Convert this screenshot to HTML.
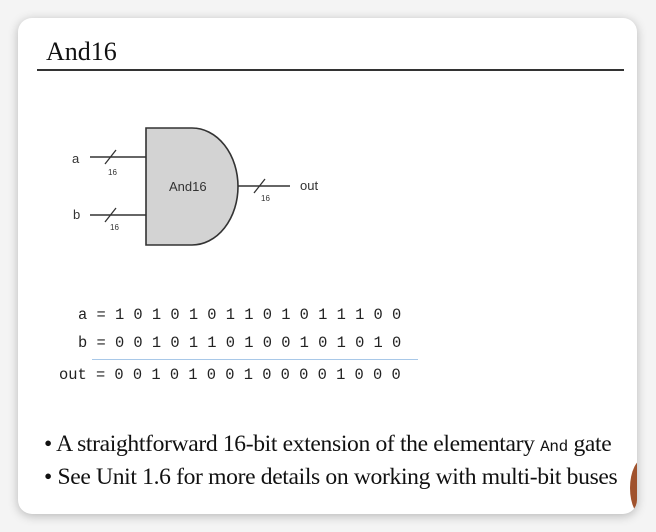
<!DOCTYPE html>
<html><head><style>
body{margin:0;width:656px;height:532px;background:#f4f4f4;overflow:hidden;position:relative;font-family:"Liberation Sans",sans-serif}
.card{position:absolute;left:18px;top:18px;width:619px;height:496px;background:#fff;border-radius:14px;box-shadow:0 2px 10px rgba(0,0,0,.25);overflow:hidden}
.t{position:absolute;font-family:"Liberation Serif",serif;color:#111}
.m{position:absolute;font-family:"Liberation Mono",monospace;font-size:15.4px;color:#222;white-space:pre}
</style></head><body>
<div class="card">
<div class="t" style="left:28px;top:19px;font-size:26px">And16</div>
<div style="position:absolute;left:19px;top:51px;width:587px;height:2px;background:#333"></div>
<svg style="position:absolute;left:0;top:0" width="619" height="496">
<g transform="translate(-18,-18)" stroke="#333" stroke-width="1.6" fill="none">
<path d="M146 128 H192 A46 58.5 0 0 1 192 245 H146 Z" fill="#d3d3d3"/>
<path d="M90 157 H146 M90 215 H146 M238 186 H290"/>
<path d="M105 164 L116 150 M105 222 L116 208 M254 193 L265 179" stroke-width="1.3"/>
<g stroke="none" fill="#333" font-family="Liberation Sans,sans-serif">
<text x="72" y="163" font-size="13">a</text>
<text x="73" y="219" font-size="13">b</text>
<text x="108" y="175" font-size="8">16</text>
<text x="110" y="230" font-size="8">16</text>
<text x="261" y="201" font-size="8">16</text>
<text x="300" y="190" font-size="13">out</text>
<text x="169" y="191" font-size="13">And16</text>
</g></g></svg>
<div class="m" style="left:60px;top:288px">a = 1 0 1 0 1 0 1 1 0 1 0 1 1 1 0 0</div>
<div class="m" style="left:60px;top:316px">b = 0 0 1 0 1 1 0 1 0 0 1 0 1 0 1 0</div>
<div style="position:absolute;left:74px;top:341px;width:326px;height:1px;background:#a8c8e8"></div>
<div class="m" style="left:41px;top:348px">out = 0 0 1 0 1 0 0 1 0 0 0 0 1 0 0 0</div>
<div class="t" style="left:26px;top:413px;font-size:23.6px;white-space:nowrap;letter-spacing:-0.35px">• A straightforward 16-bit extension of the elementary <span style="font-family:'Liberation Mono',monospace;font-size:16px">And</span> gate</div>
<div class="t" style="left:26px;top:446px;font-size:23.6px;white-space:nowrap;letter-spacing:-0.35px">• See Unit 1.6 for more details on working with multi-bit buses</div>
<div style="position:absolute;left:612px;top:440px;width:30px;height:60px;border-radius:50%;background:#a0522d"></div>
</div>
</body></html>
